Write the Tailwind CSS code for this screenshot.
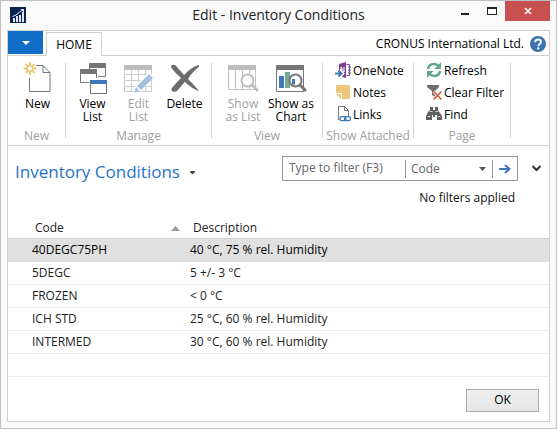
<!DOCTYPE html>
<html lang="en">
<head>
<meta charset="utf-8">
<title>Edit - Inventory Conditions</title>
<script src="https://cdn.jsdelivr.net/npm/@tailwindcss/browser@4"></script>
</head>
<body class="font-['Open_Sans','Noto_Sans',sans-serif] text-xs text-black">
<div class="flex min-h-screen flex-col border border-[#bfbfbf] bg-[#fafafa] px-1.5 pb-1.5">
  <header class="grid h-[29px] shrink-0 grid-cols-[1fr_auto_1fr] items-start">
    <svg class="mt-1.5 ml-[3px] size-4" viewBox="0 0 16 16" aria-hidden="true">
      <rect width="16" height="16" fill="#0b2350"/>
      <path d="M3 11h2v4H3zM6 9h2v6H6zM9 8h2v7H9zM12 5h2v10h-2z" fill="#e4e9f1"/>
      <path d="M2.5 9.5 6 8l3-2.500L12.500 3" fill="none" stroke="#e4e9f1" stroke-width="1"/>
      <path d="M10.500 2h3.500v3.500z" fill="#e4e9f1"/>
    </svg>
    <h1 class="mt-1 text-sm text-[#222]">Edit - Inventory Conditions</h1>
    <div class="flex h-5 justify-end">
      <button type="button" aria-label="Minimize" class="flex w-[27px] items-center justify-center"><svg class="mt-1 h-[3px] w-2" viewBox="0 0 8 3"><path d="M0 1h8v2H0z" fill="#222"/></svg></button>
      <button type="button" aria-label="Maximize" class="flex w-[27px] items-center justify-center"><svg class="h-2 w-2.5" viewBox="0 0 10 8"><path d="M0 0h10v8H0zM1 2v5h8V2z" fill="#222" fill-rule="evenodd"/></svg></button>
      <button type="button" aria-label="Close" class="flex w-[45px] items-center justify-center bg-[#c75050]"><svg class="size-2" viewBox="0 0 8 8"><path d="m1 1 6 6M7 1 1 7" stroke="#fff" stroke-width="1.600"/></svg></button>
    </div>
  </header>

  <main class="flex grow flex-col border border-[#d0d0d0] bg-white">
    <div class="flex h-[25px] items-end border-b border-[#d0d0d0]">
      <button type="button" aria-label="Application menu" class="mb-px flex h-[23px] w-[35px] items-center justify-center bg-[#106ec6]"><svg class="h-1 w-2" viewBox="0 0 8 4"><path d="M0 0h8L4 4z" fill="#fff"/></svg></button>
      <button type="button" class="-mb-px ml-[3px] h-6 w-14 border border-b-0 border-[#d0d0d0] bg-white leading-5">HOME</button>
      <span class="ml-auto self-center pt-0.5 leading-5">CRONUS International Ltd.</span>
      <button type="button" aria-label="Help" class="mr-[3px] ml-1.5 self-center pt-px"><svg class="size-4" viewBox="0 0 16 16"><circle cx="8" cy="8" r="8" fill="#3c73ad"/><path d="M5.200 6.200C5.200 4.300 6.400 3.500 8 3.500s2.900.9 2.900 2.400C10.900 8 8.300 8 8.300 10.200" fill="none" stroke="#fff" stroke-width="1.900"/><circle cx="8.200" cy="12.400" r="1.200" fill="#fff"/></svg></button>
    </div>

    <div class="flex h-[90px] border-b border-[#d0d0d0] py-[7px] leading-[13px]">
      <section class="flex w-[58px] flex-col items-center border-r border-[#d4d4d4]">
        <div class="flex grow">
          <button type="button" class="flex w-12 flex-col items-center gap-0.5 self-start pl-0.5">
            <svg class="h-8 w-7 overflow-visible" viewBox="0 0 28 32"><path d="M12.500 2.500h7l7 7V28.500H6V15M19.500 2.500v7h7" transform="translate(-.5)" fill="none" stroke="#777"/><g stroke="#ebc77a" stroke-width="2"><path d="M6-1v4M6 8v4M-.5 5.500H4M8 5.500h4.500M1.500 1l3 3M7.500 7l3 3M10.500 1l-3 3M4.500 7l-3 3"/></g><circle cx="6" cy="5.500" r="2.800" fill="#fff" stroke="#ebc77a" stroke-width="1.500"/></svg>
            New
          </button>
        </div>
        <h2 class="-mb-1 text-[#a0a0a0]">New</h2>
      </section>

      <section class="flex w-[146px] flex-col items-center border-r border-[#d4d4d4]">
        <div class="flex grow">
          <button type="button" class="flex w-[46px] flex-col items-center gap-0.5 self-start">
            <svg class="h-8 w-7" viewBox="0 0 28 32"><path d="M10 0h17v5H10zM1 6h17v5H1z" fill="#777"/><path d="M10.500 4v2M26.500 4v9.500H19M1.500 10v9.500H10M17.500 10v5" fill="none" stroke="#777"/><path d="M11.500 17.500h16v13h-16z" fill="#fff" stroke="#777"/><path d="M11 17h17v4H11z" fill="#3e78b8"/></svg>
            <span>View<br>List</span>
          </button>
          <button type="button" disabled class="flex w-[46px] flex-col items-center gap-0.5 self-start text-[#a0a0a0]">
            <svg class="h-8 w-[30px]" viewBox="0 0 30 32"><path d="M.5 6v22.500h27V6M0 11.500h28M0 17.500h28M0 23.500h28M7.500 6v22.500M14.500 6v22.500M21.500 6v22.500" fill="none" stroke="#ccc"/><path d="M0 2h28v5H0z" fill="#bdbdbd"/><path d="m9 30 2-7L25 9l5 5-14 14z" fill="#fff"/><path d="m10 30 2-6 3.500 4zM13 23 25 11l4 4-12 12z" fill="#a5c0df"/></svg>
            <span>Edit<br>List</span>
          </button>
          <button type="button" class="flex w-[46px] flex-col items-center gap-0.5 self-start">
            <svg class="h-8 w-7" viewBox="0 0 28 32"><path d="M0 4c0-3 4-3 6 0l7 8C19 6 23 3 28 2l1 1c-5 4-9 8-12 13 4 4 8 8 11 12-4-1-10-5-14-9-4 4-6 7-8 9-3 2-7 0-5-3 3-4 6-7 9-10C6 11 2 8 0 4z" fill="#6d6d6d"/></svg>
            Delete
          </button>
        </div>
        <h2 class="-mb-1 text-[#a0a0a0]">Manage</h2>
      </section>

      <section class="flex w-[111px] flex-col items-center border-r border-[#d4d4d4]">
        <div class="flex grow">
          <button type="button" disabled class="flex w-12 flex-col items-center gap-0.5 self-start text-[#a0a0a0]">
            <svg class="h-8 w-8" viewBox="0 0 32 32"><path d="M1.500 6v20.500h27V6M8.500 6v20M15.500 6v20M22.500 6v20" fill="none" stroke="#c4c4c4"/><path d="M1 2h28v5H1z" fill="#bdbdbd"/><circle cx="20.500" cy="17.500" r="6" fill="#fff" stroke="#bdbdbd" stroke-width="2"/><path d="m25 22 6 6" stroke="#bdbdbd" stroke-width="3"/></svg>
            <span>Show<br>as List</span>
          </button>
          <button type="button" class="flex w-12 flex-col items-center gap-0.5 self-start whitespace-nowrap">
            <svg class="h-8 w-8" viewBox="0 0 32 32"><path d="M1.500 6v22.500h27V6" fill="none" stroke="#777"/><path d="M1 2h28v5H1z" fill="#777"/><path d="M4 13h5v12H4z" fill="#3e78b8"/><path d="M10 9h5v16h-5z" fill="#75a897"/><circle cx="20.500" cy="17.500" r="6" fill="#fff" stroke="#777" stroke-width="2"/><path d="M17 16h3v6l-3-1z" fill="#3e78b8"/><path d="m25 22 6 6" stroke="#777" stroke-width="3"/></svg>
            <span>Show as<br>Chart</span>
          </button>
        </div>
        <h2 class="-mb-1 text-[#a0a0a0]">View</h2>
      </section>

      <section class="flex w-[91px] flex-col border-r border-[#d4d4d4]">
        <div class="flex grow flex-col items-start pl-3">
          <button type="button" class="flex h-[22px] items-center gap-0.5 pb-2">
            <svg class="h-4 w-4" viewBox="0 0 16 16"><path d="M4 2l7-2v16l-7-2z" fill="#7b3f8f"/><path d="M11.500 2.500h3v11h-3M13 5h3M13 8h3M13 11h3" fill="none" stroke="#7b3f8f"/><path d="M6 10V5l3 5V5" fill="none" stroke="#fff"/><path d="M0 11.500h6M4 8.500l3 3-3 3" fill="none" stroke="#fff" stroke-width="4"/><path d="M0 11.500h6M3.500 8.500l3 3-3 3" fill="none" stroke="#3e78b8" stroke-width="2"/></svg>
            OneNote
          </button>
          <button type="button" class="flex h-[22px] items-center gap-0.5 pb-2">
            <svg class="h-4 w-4" viewBox="0 0 16 16"><path d="M1 1h14v14H7V9H1z" fill="#ecc77c"/><path d="M1 10h5v5z" fill="#ecc77c"/></svg>
            Notes
          </button>
          <button type="button" class="flex h-[22px] items-center gap-0.5 pb-2">
            <svg class="h-4 w-4" viewBox="0 0 16 16"><path d="M3.500 14V.5h6l4 4V10M9.500.5v4h4" fill="none" stroke="#777"/><g fill="#fff" stroke="#3e78b8" stroke-width="1.300"><rect x="5" y="10.700" width="6" height="4" rx="2"/><rect x="9.500" y="10.700" width="6" height="4" rx="2" fill="none"/></g></svg>
            Links
          </button>
        </div>
        <h2 class="-mb-1 text-center whitespace-nowrap text-[#a0a0a0]">Show Attached</h2>
      </section>

      <section class="flex w-[97px] flex-col border-r border-[#d4d4d4]">
        <div class="flex grow flex-col items-start pl-3">
          <button type="button" class="flex h-[22px] items-center gap-0.5 pb-2">
            <svg class="h-4 w-4" viewBox="0 0 16 16"><g fill="none" stroke="#62a58e" stroke-width="2.500"><path d="M2 7c.5-3.500 3-5 6-5 2 0 3.500.8 5 2.500M14 9c-.5 3.500-3 5-6 5-2 0-3.500-.8-5-2.500"/></g><path d="M15 0v7H8.500zM1 16V9h6.500z" fill="#62a58e"/></svg>
            Refresh
          </button>
          <button type="button" class="flex h-[22px] items-center gap-0.5 pb-2 whitespace-nowrap">
            <svg class="h-4 w-4" viewBox="0 0 16 16"><path d="M1 1h12v2L9 7v6l-3-2V7L1 3z" fill="#6d6d6d"/><path d="m7.500 7.500 8 8M15.500 7.500l-8 8" stroke="#fff" stroke-width="3"/><path d="m7.500 7.500 8 8M15.500 7.500l-8 8" stroke="#d6542c" stroke-width="1.500"/></svg>
            Clear Filter
          </button>
          <button type="button" class="flex h-[22px] items-center gap-0.5 pb-2">
            <svg class="h-4 w-4" viewBox="0 0 16 16"><path d="M4 1h3v3h2V1h3v3l2 3 2 3v4h-5V9H9v2H7V9H6v5H0v-4l2-4 2-2z" fill="#5f5f5f"/><path d="M1.500 10.500h3M11.500 10.500h3M3.500 5.500h3M9.500 5.500h3" stroke="#ccc"/></svg>
            Find
          </button>
        </div>
        <h2 class="-mb-1 text-center text-[#a0a0a0]">Page</h2>
      </section>
    </div>

    <div class="flex justify-between pt-2.5 pr-2 pl-[7px]">
      <button type="button" class="flex h-8 items-center gap-2.5 text-[17px] text-[#1f74c8]">Inventory Conditions
        <svg class="h-[3px] w-[5px]" viewBox="0 0 5 3"><path d="M0 0h5v1L3 3H2L0 1z" fill="#444"/></svg>
      </button>
      <div class="flex items-center gap-3.5 self-start">
        <div class="flex h-[25px] w-[236px] items-center border border-[#999]">
          <input type="text" aria-label="Type to filter" placeholder="Type to filter (F3)" class="w-[122px] pb-0.5 pl-1.5 leading-5 outline-none placeholder:text-[#666]">
          <div class="relative flex h-[18px] grow items-center border-x border-[#999]">
            <select aria-label="Filter column" class="w-full appearance-none pl-[5px] leading-4 text-[#666] outline-none"><option>Code</option></select>
            <svg class="pointer-events-none absolute right-1.5 h-1 w-[7px]" viewBox="0 0 7 4"><path d="M0 0h7L3.500 4z" fill="#555"/></svg>
          </div>
          <button type="button" aria-label="Apply filter" class="flex w-6 justify-center"><svg class="h-2.5 w-3" viewBox="0 0 12 10"><path d="M0 5h10M6 1l4.500 4L6 9" fill="none" stroke="#3e78b8" stroke-width="2"/></svg></button>
        </div>
        <button type="button" aria-label="Expand filter pane"><svg class="h-[7px] w-[9px]" viewBox="0 0 9 7"><path d="m.5 1 4 4 4-4" fill="none" stroke="#333" stroke-width="2"/></svg></button>
      </div>
    </div>
    <p class="mt-0.5 pr-[34px] text-right leading-4 text-[#111]">No filters applied</p>

    <table class="mt-2.5 w-full table-fixed border-separate border-spacing-0 text-left text-[#222] [&_td]:h-[23px] [&_td]:border-b [&_td]:border-[#ececec] [&_td]:p-0 [&_th]:h-[23px] [&_th]:border-b [&_th]:border-[#d0d0d0] [&_th]:pt-0.5 [&_th]:font-normal">
      <thead>
        <tr>
          <th class="w-[179px] pl-[27px]"><div class="flex items-center justify-between pr-[7px]">Code<svg class="h-[5px] w-[9px]" viewBox="0 0 9 5"><path d="M4.500 0 9 5H0z" fill="#999"/></svg></div></th>
          <th class="pl-1.5">Description</th>
        </tr>
      </thead>
      <tbody>
        <tr class="bg-[#e0e0e0] text-black [&>td]:border-[#e0e0e0]"><td><div class="pl-6">40DEGC75PH</div></td><td><div class="pl-[3px]">40 °C, 75 % rel. Humidity</div></td></tr>
        <tr><td><div class="pl-6">5DEGC</div></td><td><div class="pl-[3px]">5 +/- 3 °C</div></td></tr>
        <tr><td><div class="pl-6">FROZEN</div></td><td><div class="pl-[3px]">&lt; 0 °C</div></td></tr>
        <tr><td><div class="pl-6">ICH STD</div></td><td><div class="pl-[3px]">25 °C, 60 % rel. Humidity</div></td></tr>
        <tr><td><div class="pl-6">INTERMED</div></td><td><div class="pl-[3px]">30 °C, 60 % rel. Humidity</div></td></tr>
        <tr><td></td><td></td></tr>
      </tbody>
    </table>

    <div class="mt-auto flex justify-end pr-2.5 pb-[9px]">
      <button type="button" class="h-[23px] w-[73px] border border-[#acacac] bg-linear-to-b from-[#f0f0f0] to-[#e5e5e5] pb-px">OK</button>
    </div>
  </main>
</div>
</body>
</html>
